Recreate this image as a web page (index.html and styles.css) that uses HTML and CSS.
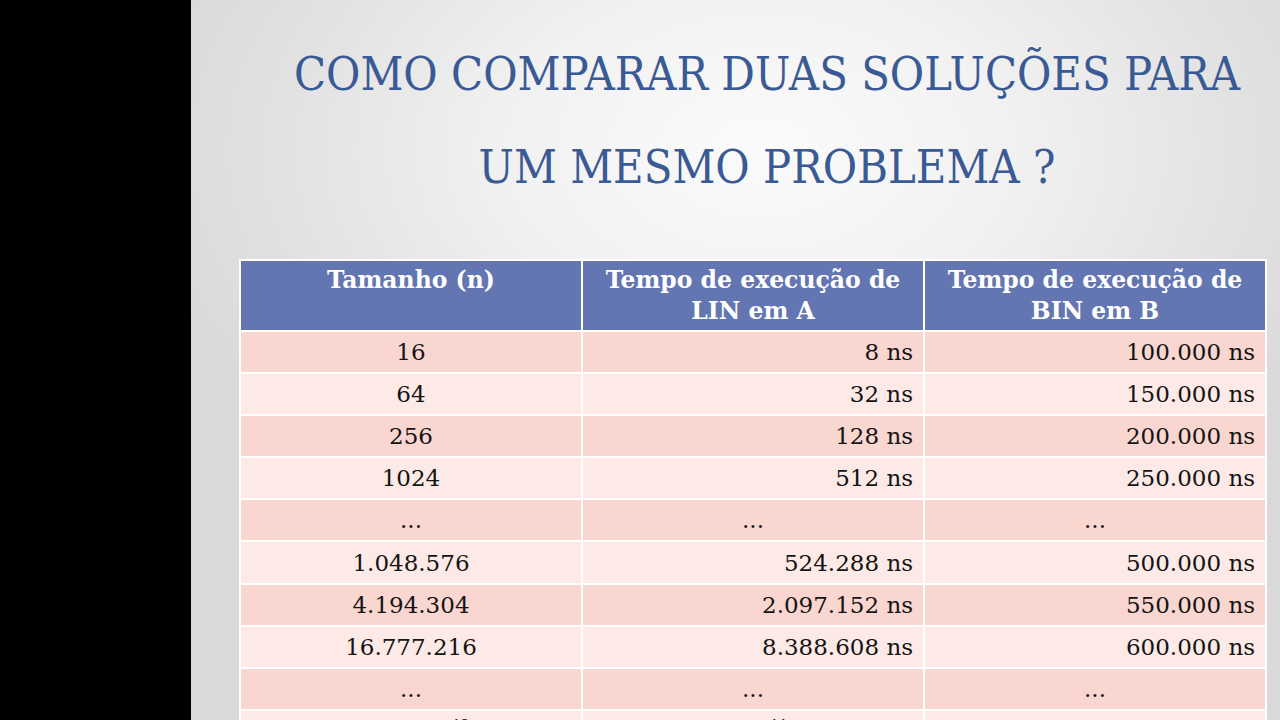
FILE: index.html
```html
<!DOCTYPE html>
<html lang="pt">
<head>
<meta charset="utf-8">
<title>Como comparar duas soluções</title>
<link rel="stylesheet" href="styles.css">
</head>
<body>
<div class="page">
  <div class="side"></div>
  <div class="slide">
    <h1 class="title">COMO COMPARAR DUAS SOLUÇÕES PARA<br>UM MESMO PROBLEMA ?</h1>
    <table class="grid">
      <colgroup><col class="c1"><col class="c2"><col class="c3"></colgroup>
      <thead>
        <tr><th>Tamanho (n)</th><th>Tempo de execução de LIN em A</th><th>Tempo de execução de BIN em B</th></tr>
      </thead>
      <tbody>
        <tr class="dark"><td class="ctr">16</td><td class="num">8 ns</td><td class="num">100.000 ns</td></tr>
        <tr class="light"><td class="ctr">64</td><td class="num">32 ns</td><td class="num">150.000 ns</td></tr>
        <tr class="dark"><td class="ctr">256</td><td class="num">128 ns</td><td class="num">200.000 ns</td></tr>
        <tr class="light"><td class="ctr">1024</td><td class="num">512 ns</td><td class="num">250.000 ns</td></tr>
        <tr class="dark"><td class="ctr">...</td><td class="ctr">...</td><td class="ctr">...</td></tr>
        <tr class="light"><td class="ctr">1.048.576</td><td class="num">524.288 ns</td><td class="num">500.000 ns</td></tr>
        <tr class="dark"><td class="ctr">4.194.304</td><td class="num">2.097.152 ns</td><td class="num">550.000 ns</td></tr>
        <tr class="light"><td class="ctr">16.777.216</td><td class="num">8.388.608 ns</td><td class="num">600.000 ns</td></tr>
        <tr class="dark"><td class="ctr">...</td><td class="ctr">...</td><td class="ctr">...</td></tr>
        <tr class="light"><td class="ctr">1,1 × 10<sup>12</sup></td><td class="num">5,5 × 10<sup>11</sup> ns (9 min)</td><td class="num">2.000.000 ns</td></tr>
      </tbody>
    </table>
  </div>
</div>
</body>
</html>
```
FILE: styles.css
```css
html, body {
  margin: 0;
  padding: 0;
  width: 1280px;
  height: 720px;
  overflow: hidden;
  background: #000;
}

.page {
  display: flex;
  width: 1280px;
  height: 720px;
  overflow: hidden;
}

.side {
  width: 191px;
  flex-shrink: 0;
  background: #000;
}

.slide {
  flex: 1;
  min-width: 0;
  overflow: hidden;
  background: radial-gradient(ellipse 640px 420px at 570px 150px, #fbfbfb 0%, #f1f1f1 40%, #e2e2e2 75%, #d9d9d9 100%);
  font-family: "DejaVu Serif", "Liberation Serif", serif;
}

.title {
  width: 1152px;
  margin: 28px 0 0 0;
  font-family: "DejaVu Serif Condensed", "DejaVu Serif", serif;
  font-stretch: condensed;
  font-size: 46.6px;
  font-weight: normal;
  line-height: 93px;
  color: #3a5a95;
  text-align: center;
  letter-spacing: 0;
}

.grid {
  margin: 45px 0 0 48px;
  width: 1028px;
  table-layout: fixed;
  border-collapse: collapse;
  border: 2px solid #fff;
  font-size: 23px;
  color: #141414;
}

.grid th,
.grid td {
  border: 2px solid #fff;
}

.grid th {
  background: #6476b1;
  color: #fff;
  font-weight: bold;
  font-size: 23.5px;
  line-height: 31px;
  padding: 4px 8px 3px;
  vertical-align: top;
  text-align: center;
}

.grid td {
  height: 40.1px;
  padding: 0 10px;
  line-height: 40px;
  white-space: nowrap;
}

.dark td { background: #fad6d0; }
.light td { background: #fdeae7; }

.ctr { text-align: center; }
.num { text-align: right; }

sup {
  font-size: 14px;
  line-height: 0;
}
```
